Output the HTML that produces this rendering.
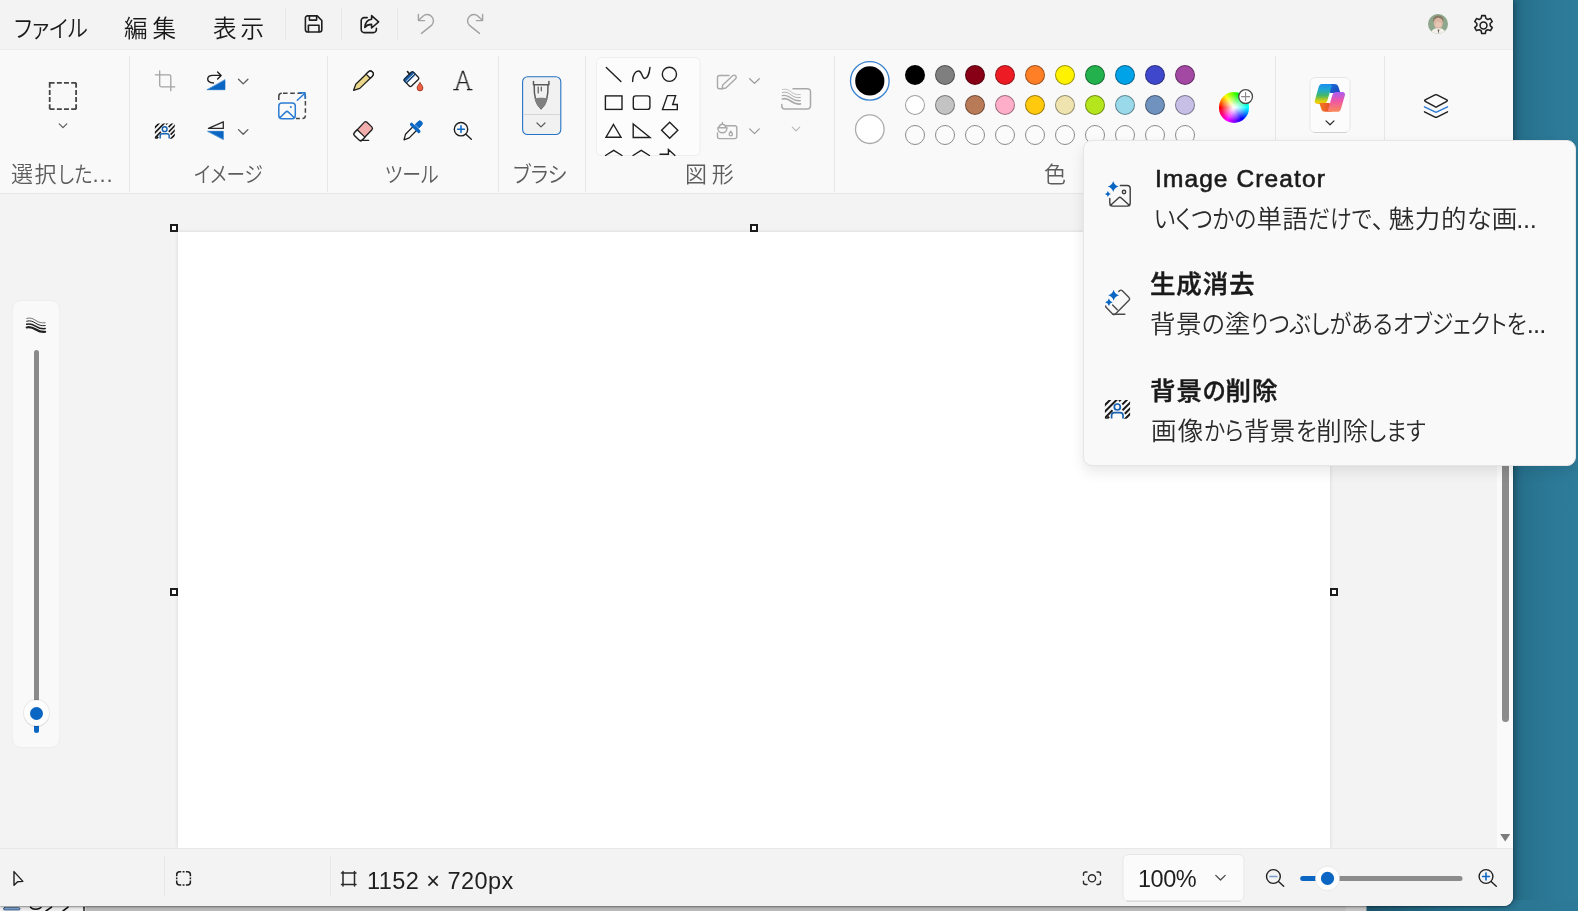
<!DOCTYPE html>
<html lang="ja">
<head>
<meta charset="utf-8">
<title>ペイント</title>
<style>
*{box-sizing:border-box;margin:0;padding:0}
html,body{width:1578px;height:911px;overflow:hidden}
body{position:relative;font-family:"Liberation Sans","Noto Sans CJK JP",sans-serif;color:#1b1b1b;
 background:linear-gradient(90deg,#246985 0px,#246985 1513px,#27708c 1522px,#2a7693 1540px,#2c7a98 1558px,#2d7c9a 1578px)}
.abs{position:absolute}
#bottomstrip{left:0;top:900px;width:1578px;height:11px;background:linear-gradient(90deg,#f2f2f2 0,#f2f2f2 85px,#bebebe 86px,#bebebe 1345px,#c9c9c9 1346px,#c9c9c9 1366px,#1d566c 1367px,#246b86 1440px,#2a7592 1513px,#2c7a98 1578px)}
#win{left:0;top:0;width:1513px;height:906px;background:#f3f3f3;border-radius:0 0 9px 0;overflow:hidden;box-shadow:3px 0 7px rgba(0,0,0,.22),0 1px 2px rgba(0,0,0,.35)}
#title{left:0;top:0;width:1513px;height:49px;background:#f3f3f3}
#ribbon{left:0;top:49px;width:1513px;height:145px;background:#f9f9f9;border-top:1px solid #ececec;border-bottom:1px solid #e6e6e6}
.menu{position:absolute;top:9.7px;font-size:23.6px;font-weight:350;line-height:38px;color:#1a1a1a;white-space:nowrap;font-feature-settings:"palt"}
.vsep{position:absolute;width:1px;background:#e7e7e7}
.glabel{position:absolute;top:159px;font-size:22px;font-weight:350;line-height:32px;color:#5d5d5d;white-space:nowrap;font-feature-settings:"palt"}
svg{position:absolute;overflow:visible}
.sw{position:absolute;width:20px;height:20px;border-radius:50%;border:1px solid rgba(0,0,0,.38)}
.sw.e{border:1.2px solid #8a8a8a;background:#fbfbfb}
#work{left:0;top:194px;width:1513px;height:654px;background:#f3f3f3}
#canvas{left:178px;top:232px;width:1152px;height:616px;background:#fff;box-shadow:0 0 4px rgba(0,0,0,.13)}
.hd{position:absolute;width:8px;height:8px;border:2px solid #1c1c1c;background:#fff}
#status{left:0;top:848px;width:1513px;height:58px;background:#f3f3f3;border-top:1px solid #e8e8e8}
#popup{left:1083px;top:139.500px;width:493px;height:326.800px;background:#f9f9f9;border-radius:9px;border:1px solid #e6e6e6;box-shadow:0 6px 14px rgba(0,0,0,.09),0 0 2px rgba(0,0,0,.06)}
#popin{left:1px;top:.5px;width:10px;height:10px}
.pt{position:absolute;font-weight:500;-webkit-text-stroke:.45px #1a1a1a;font-size:25.5px;line-height:34px;color:#1a1a1a;white-space:nowrap;font-feature-settings:"palt"}
.pd{position:absolute;font-weight:350;font-size:25.5px;line-height:34px;color:#2a2a2a;white-space:nowrap;font-feature-settings:"palt"}
.k{display:inline-block;transform-origin:0 50%}
.stx{font-size:23.500px;line-height:30px;color:#1f1f1f;white-space:nowrap}
.menu,.glabel,.pt,.pd,.stx,.aicon{will-change:transform}
</style>
</head>
<body>
<div id="bottomstrip" class="abs"><svg style="left:0;top:0" width="100" height="11" viewBox="0 900 100 11" fill="none" stroke-linecap="round"><rect x="3.500" y="907.700" width="16.500" height="2.200" rx="1.100" fill="#8fb8ea" stroke="#1d3f66" stroke-width=".8"/><path d="M30.500 907.200c2 2.600 8 2.600 10.500 .3" stroke="#111" stroke-width="1.500"/><path d="M46 911l5.500-3.800M63 911l5-3.800" stroke="#111" stroke-width="1.600"/><path d="M84 907.300v4" stroke="#111" stroke-width="1.400"/></svg></div>
<div id="win" class="abs">
  <div id="title" class="abs">
    <div class="menu" style="left:13.6px"><span class="k" style="transform:scaleX(0.904);margin-right:-7.86px">ファイル</span></div>
    <div class="menu" style="left:124.0px"><span style="letter-spacing:4.8px">編集</span></div>
    <div class="menu" style="left:212.8px"><span style="letter-spacing:3.8px">表示</span></div>
    <div class="vsep" style="left:285px;top:8px;height:32px"></div>
    <div class="vsep" style="left:341px;top:8px;height:32px"></div>
    <div class="vsep" style="left:397px;top:8px;height:32px"></div>

    <svg style="left:304px;top:14px" width="20" height="20" viewBox="0 0 20 20" fill="none" stroke="#1f1f1f" stroke-width="1.6" stroke-linejoin="round" stroke-linecap="round">
      <path d="M3.6 1.9h9.6l4.6 4.6v9.3a2.2 2.2 0 0 1-2.2 2.2H3.6a2.2 2.2 0 0 1-2.2-2.2V4.1a2.2 2.2 0 0 1 2.2-2.2z"/>
      <path d="M5.4 2.2v3.9h7.2V2.2M4.4 17.8v-6.6h10.6v6.6"/>
    </svg>
    <svg style="left:359px;top:13px" width="22" height="22" viewBox="0 0 22 22" fill="none" stroke="#1f1f1f" stroke-width="1.6" stroke-linejoin="round" stroke-linecap="round">
      <path d="M8.2 4.6H5.2a3 3 0 0 0-3 3v9a3 3 0 0 0 3 3h9.2a3 3 0 0 0 3-3v-1.2"/>
      <path d="M12.6 2.6l7 6.2-7 6.2v-3.6c-3.2 0-5.2.9-6.8 3 .4-4.800 2.800-7.800 6.800-8.200z"/>
    </svg>
    <svg style="left:415px;top:12px" width="22" height="24" viewBox="0 0 22 24" fill="none" stroke="#a2a2a2" stroke-width="1.4" stroke-linejoin="round" stroke-linecap="round">
      <path d="M3.4 2.400v6.200h6.200"/><path d="M3.700 8.300l4.200-4.100a6.300 6.300 0 0 1 8.900 8.900L6.500 21.400"/>
    </svg>
    <svg style="left:464px;top:12px" width="22" height="24" viewBox="0 0 22 24" fill="none" stroke="#a2a2a2" stroke-width="1.4" stroke-linejoin="round" stroke-linecap="round">
      <g transform="translate(22 0) scale(-1 1)"><path d="M3.4 2.400v6.200h6.200"/><path d="M3.700 8.300l4.200-4.100a6.300 6.300 0 0 1 8.900 8.900L6.500 21.400"/></g>
    </svg>
    <svg id="avatar" style="left:1428px;top:13.700px" width="20" height="20" viewBox="0 0 20 20"><defs><clipPath id="avc"><circle cx="10" cy="10" r="10"/></clipPath></defs><g clip-path="url(#avc)"><rect width="20" height="20" fill="#8ea68c"/><ellipse cx="10.300" cy="5.800" rx="5.300" ry="4.200" fill="#8b7a66"/><ellipse cx="10.300" cy="9.300" rx="4.600" ry="5.600" fill="#dcb8a4"/><ellipse cx="10.300" cy="10.500" rx="3" ry="2.600" fill="#e6c7b6"/><path d="M2.500 20c.5-4 3.500-5.800 7.800-5.800s7.300 1.800 7.800 5.800z" fill="#f3efe9"/><path d="M9.600 15.500l.8 4.500 1-4.500z" fill="#6b5a52"/></g></svg>
    <svg style="left:1471.200px;top:12.500px" width="25" height="25" viewBox="0 0 24 24" fill="none" stroke="#1f1f1f" stroke-width="1.5" stroke-linejoin="round">
      <circle cx="12" cy="12" r="3.3"/>
      <path d="M10.300 2.500h3.400l.6 2.700 1.800 1 2.600-.9 1.700 2.900-2 1.900v2l2 1.900-1.700 2.900-2.600-.9-1.800 1-.6 2.700h-3.400l-.6-2.700-1.800-1-2.600.9-1.700-2.900 2-1.900v-2l-2-1.900 1.700-2.900 2.600.9 1.800-1z"/>
    </svg>
  </div>
  <div id="ribbon" class="abs"></div>
  <div id="ribbonitems" class="abs" style="left:0;top:0;width:1513px;height:194px">
    <div class="vsep" style="left:129px;top:56px;height:136px"></div>
    <div class="vsep" style="left:327px;top:56px;height:136px"></div>
    <div class="vsep" style="left:498px;top:56px;height:136px"></div>
    <div class="vsep" style="left:585px;top:56px;height:136px"></div>
    <div class="vsep" style="left:834px;top:56px;height:136px"></div>
    <div class="vsep" style="left:1275px;top:56px;height:136px"></div>
    <div class="vsep" style="left:1384px;top:56px;height:136px"></div>
<!--ICONS-->
  <svg id="ricons" style="left:0;top:0" width="1513" height="200" viewBox="0 0 1513 200" fill="none" stroke-linecap="round" stroke-linejoin="round">
    <defs>
      <clipPath id="hatchclip"><rect x="1104.900" y="399.900" width="25.200" height="18.900"/></clipPath>
      <linearGradient id="cpL" x1="0" y1="0" x2="0" y2="1"><stop offset="0" stop-color="#1a8ff0"/><stop offset=".3" stop-color="#1fa9cf"/><stop offset=".58" stop-color="#45b865"/><stop offset=".85" stop-color="#d9cf12"/><stop offset="1" stop-color="#fbc80e"/></linearGradient>
      <linearGradient id="cpR" x1="0" y1="1" x2="0" y2="0"><stop offset="0" stop-color="#a95cf2"/><stop offset=".45" stop-color="#ee56a6"/><stop offset="1" stop-color="#fc8a58"/></linearGradient>
      <linearGradient id="cpT" x1="0" y1="0" x2="1" y2="1"><stop offset="0" stop-color="#1a73e0"/><stop offset="1" stop-color="#1b3fb5"/></linearGradient>
      <linearGradient id="cpB" x1="0" y1="0" x2="1" y2="0"><stop offset="0" stop-color="#e84a2a"/><stop offset="1" stop-color="#f27a25"/></linearGradient>
    </defs>
    <!-- select -->
    <path d="M49.700 82.800H76.100V109.200H49.700z" stroke="#454545" stroke-width="1.800" stroke-dasharray="4.900 2.250 5 2.100 5 2.250 4.900 0" stroke-linecap="butt" stroke-linejoin="miter"/>
    <path d="M59.200 123.800l3.800 3.800 3.800-3.800" stroke="#5a5a5a" stroke-width="1.200"/>
    <!-- crop -->
    <g stroke="#a3a3a3" stroke-width="1.300"><path d="M159.700 70.800V85.300a1.500 1.500 0 0 0 1.500 1.500H174.800"/><path d="M155.400 74.800H169.300a1.500 1.500 0 0 1 1.500 1.500V90.800"/></g>
    <!-- rotate -->
    <path d="M207.300 89.700H225V80z" fill="#0a66c2" stroke="#0a66c2" stroke-width=".6"/>
    <g stroke="#1f1f1f" stroke-width="1.400"><path d="M213.500 83c-3 -.2 -5.800 -1.600 -5.800 -4 0-2.400 2.500-3.600 5.300-3.600h7.600"/><path d="M217.600 72l3.500 3.400-3.500 3.500"/></g>
    <path d="M238.500 79.300l4.700 4.600 4.700-4.600" stroke="#5a5a5a" stroke-width="1.300"/>
    <!-- bg remove -->
    <g transform="translate(154.800 123.300) scale(.790 .810) translate(-1104.800 -399.800)">
      <g stroke="#1a1a1a" stroke-width="2" stroke-linecap="butt" clip-path="url(#hatchclip)">
        <path d="M1103 407l9-9M1103 413.500l14.500-14.500M1103 419.800l9.500-9.500M1105 420.800l4.200-4.200M1119 401.300l3.300-3.300M1122.300 404.500l6.900-6.900M1122.500 410.300l9.500-9.500M1124.800 413.800l7.200-7.200M1123.200 420.800l8.800-8.800"/>
      </g>
      <g stroke="#1560b0" stroke-width="1.800"><circle cx="1117.300" cy="407" r="3"/><path d="M1111.600 418.600v-3.300a2.700 2.700 0 0 1 2.700-2.700h6a2.700 2.700 0 0 1 2.700 2.700v3.300" stroke-linecap="butt"/></g>
    </g>
    <!-- flip -->
    <path d="M208.500 128.400L223.300 121.800V128.400z" stroke="#2a2a2a" stroke-width="1.300"/>
    <path d="M207.900 131.300H223.300V139.300z" fill="#0a66c2" stroke="#0a66c2" stroke-width=".6"/>
    <path d="M238.500 129.600l4.700 4.600 4.700-4.600" stroke="#5a5a5a" stroke-width="1.300"/>
    <!-- resize -->
    <path d="M283 93.200H302.400a3 3 0 0 1 3 3V115.500a3 3 0 0 1-3 3H296" stroke="#444" stroke-width="1.500" stroke-dasharray="4.600 2.600" stroke-linecap="butt"/>
    <path d="M278.800 100V96.200a3 3 0 0 1 3-3" stroke="#444" stroke-width="1.500" stroke-linecap="butt"/>
    <g stroke="#2b7cd3" stroke-width="1.500"><rect x="278.800" y="102.900" width="16.500" height="15.800" rx="3.200"/><path d="M280.300 117.300l5.300-5.200a2 2 0 0 1 2.800 0l5.400 5.200"/><path d="M297.300 100.300l7.600-7M299.300 92.800h5.800v5.800"/></g>
    <circle cx="290.800" cy="107" r="1" fill="#2b7cd3"/>
    <!-- pencil -->
    <g transform="translate(353.600 90.300) rotate(-44.100)" stroke="#1f1f1f" stroke-width="1.300">
      <path d="M0 0L5.800 -2.900H23.300a2.900 2.900 0 0 1 0 5.800H5.800z" fill="#ead78a"/>
      <path d="M20.300 -2.900h3a2.900 2.900 0 0 1 0 5.800h-3z" fill="#fdfdfd"/>
    </g>
    <!-- fill bucket -->
    <g transform="translate(411.450 79.200) rotate(-44)" stroke="#1f1f1f" stroke-width="1.300">
      <rect x="-6.300" y="-5" width="12.600" height="10" rx="1.600" fill="#fdfdfd"/>
      <path d="M-6.300 -1.300V-3.400a1.600 1.600 0 0 1 1.600 -1.600H4.700a1.600 1.600 0 0 1 1.600 1.600V-1.300z" fill="#1d5ea8" stroke="#16324f"/>
      <path d="M-5.300 -.400H5.300" stroke="#1d5ea8" stroke-width=".9"/>
      <path d="M-5.400 -2H5.400" stroke="#dcebfa" stroke-width=".9"/>
      <path d="M2.400 -5V-8.200" stroke-width="1.600"/>
    </g>
    <path d="M420 82.800c1.700 2 2.900 3.500 2.900 5.200a2.900 2.900 0 0 1-5.800 0c0-1.700 1.200-3.200 2.900-5.200z" fill="#ee5f46" stroke="#8a3216" stroke-width=".8"/>
    <!-- A serifs -->
    <path d="M453.700 89.700h4.600M467.400 89.700h4.600" stroke="#1f1f1f" stroke-width="1.200"/>
    <!-- eraser -->
    <g stroke="#1f1f1f" stroke-width="1.300">
      <path d="M354.400 132.700l9.800-10.300a2 2 0 0 1 2.800-.1l4.800 4.600a2 2 0 0 1 .1 2.800l-9.800 10.300a2 2 0 0 1-2.800.1l-4.800-4.600a2 2 0 0 1-.1-2.800z" fill="#f2adad"/>
      <path d="M357.200 129.800l7.700 7.300-2.800 2.900a2 2 0 0 1-2.800.1l-4.800-4.600a2 2 0 0 1-.1-2.800z" fill="#fdfdfd"/>
      <path d="M361 140.300h7.700"/>
    </g>
    <!-- picker -->
    <g stroke="#1f1f1f" stroke-width="1.300">
      <path d="M404 139.800l1.500-5.500 8-8.200 3.700 3.600-8 8.200z" fill="#fdfdfd"/>
    </g>
    <g fill="#0a66c2" stroke="#0a66c2" stroke-width="1"><path d="M415.300 124.500l2.700-2.800a2.500 2.500 0 0 1 3.600 3.500l-2.700 2.800z"/><path d="M411.500 124.300l7.400 7.200" stroke-width="3.200"/></g>
    <!-- zoom -->
    <g stroke="#1f1f1f" stroke-width="1.400"><circle cx="461" cy="129.200" r="6.700"/><path d="M466 134.200l5.300 5"/></g>
    <path d="M457.600 129.200h6.800M461 125.800v6.800" stroke="#0a66c2" stroke-width="1.500"/>
    <!-- brush button -->
    <rect x="522.600" y="76.700" width="38.200" height="57.800" rx="5" fill="#f1f1f1" stroke="#2473c4" stroke-width="1.100"/>
    <path d="M524 114.500h35.500" stroke="#d6d6d6" stroke-width="1"/>
    <path d="M537 123l4 3.900 4-3.900" stroke="#5a5a5a" stroke-width="1.200"/>
    <g stroke="#5a5a5a" stroke-width="1.500">
      <path d="M533.500 81.600v3.100h15.400v-3.100"/>
      <path d="M534.200 84.700c-.3 9.500 1.700 19.500 6.900 24.100 5.200-4.600 7.200-14.600 6.900-24.100"/>
      <path d="M538.200 87v6M541.300 87v3.800" stroke-width="1.200"/>
    </g>
    <path d="M534.600 98.200c2.300-.7 10.600-.7 12.900 0-.8 4.700-2.800 8.500-6.400 10.600-3.600-2.100-5.700-5.900-6.500-10.600z" fill="#808080"/>
    <!-- shapes gallery -->
    <rect x="596.500" y="57.500" width="103.500" height="98" rx="5" fill="#fcfcfc" stroke="#eeeeee" stroke-width="1"/>
    <g stroke="#1f1f1f" stroke-width="1.400" stroke-linejoin="miter">
      <path d="M606.300 67.400L620.900 81.500"/>
      <path d="M632.600 81.500c0-7 3-10.500 6-10.500 3.600 0 3.200 7.500 6.200 7.500 2.600 0 4.600-5.500 5.200-11.100" stroke-linejoin="round"/>
      <circle cx="669.400" cy="74.300" r="7.100"/>
      <rect x="605.400" y="95.900" width="16.600" height="13.500"/>
      <rect x="633.300" y="95.900" width="16.600" height="13.500" rx="2.500"/>
      <path d="M667.400 95.600H675.600L672.700 104.500H677.300V109.600H662.500z"/>
      <path d="M613.500 124.500L621 137.200H606z"/>
      <path d="M633.200 124V137.500H650z"/>
      <path d="M669.700 122.300L677.800 130.300L669.700 138.300L661.600 130.300z"/>
    </g>
    <g stroke="#1f1f1f" stroke-width="1.400" stroke-linejoin="miter" clip-path="inset(0)">
      <path d="M605.500 155.500L613.700 150.300L622 155.500" />
      <path d="M633 155.500L641.200 150.300L649.500 155.500"/>
      <path d="M660 154.300H668.400V149.500L675 155.500"/>
    </g>
    <!-- outline & fill (disabled) -->
    <g stroke="#a9a9a9" stroke-width="1.400">
      <path d="M729 75.500H719.500a2 2 0 0 0-2 2V86.800a2 2 0 0 0 2 2H722"/>
      <path d="M722 88.800l.8-3.800 9.800-9.200a2.100 2.100 0 0 1 3 0 2.100 2.100 0 0 1 0 3l-9.800 9.200z"/>
      <path d="M725.500 125.800H734.800a2 2 0 0 1 2 2V136.600a2 2 0 0 1-2 2H719.500a2 2 0 0 1-2-2V133"/>
      <path d="M717.800 127.800h9.200c0 3-2 5-4.600 5s-4.600-2-4.600-5zM718.800 127.500c.5-2 2-3.300 3.600-3.300s3.100 1.300 3.600 3.300M722.400 122.500v1.700"/>
      <path d="M730.800 131.200c1 1.300 1.600 2.200 1.600 3.100a1.600 1.600 0 0 1-3.200 0c0-.9.600-1.800 1.600-3.100z"/>
    </g>
    <path d="M749.700 78.700l4.800 4.700 4.800-4.700" stroke="#9a9a9a" stroke-width="1.300"/>
    <path d="M749.700 128.900l4.800 4.700 4.800-4.700" stroke="#9a9a9a" stroke-width="1.300"/>
    <!-- size -->
    <g stroke="#a9a9a9">
      <path d="M793 88.700H807.500a3 3 0 0 1 3 3V106a3 3 0 0 1-3 3H784.800a3 3 0 0 1-3-3V104.500" stroke-width="1.500"/>
      <path d="M782.300 89.6c3.800-1.200 6 .200 8.800 2.300s5.200 3.200 9.300 2.600" stroke-width="0.7"/>
      <path d="M782.300 92.6c3.800-1.200 6 .200 8.800 2.300s5.200 3.200 9.300 2.600" stroke-width="1.0"/>
      <path d="M782.300 95.7c3.800-1.200 6 .200 8.800 2.300s5.200 3.200 9.300 2.600" stroke-width="1.3"/>
      <path d="M782.300 99.0c3.800-1.200 6 .200 8.800 2.300s5.200 3.200 9.300 2.600" stroke-width="1.7"/>
    </g>
    <path d="M792.300 127.200l3.700 3.600 3.700-3.600" stroke="#b5b5b5" stroke-width="1.100"/>
    <!-- colours 1/2 -->
    <circle cx="869.800" cy="80.900" r="19.300" fill="#fdfdfd" stroke="#3a82cf" stroke-width="1.300"/>
    <circle cx="869.800" cy="80.900" r="14.600" fill="#000"/>
    <circle cx="869.800" cy="129.200" r="14.300" fill="#fff" stroke="#ababab" stroke-width="1.300"/>
    <!-- copilot button -->
    <rect x="1310" y="77.500" width="40" height="55" rx="5" fill="#fcfcfc" stroke="#e6e6e6" stroke-width="1"/>
    <path d="M1314 132.500h32" stroke="#d2d2d2" stroke-width="1"/>
    <path d="M1326 120.900l4 3.900 4-3.900" stroke="#2a2a2a" stroke-width="1.200"/>
    <g stroke="none">
      <path d="M1328 84.100h6.500c2.200 0 3.400 1.100 4 3l1.900 5.800h-6c-1.500 0-3 .3-4.500-.2z" fill="url(#cpT)"/>
      <path d="M1321.800 84.100h8c1.600 0 2.100 1.100 1.700 2.500l-4.200 14.200c-.6 2-1.800 3.100-3.800 3.100h-6.100c-2.200 0-3.100-1.500-2.500-3.600l3.800-13.200c.6-2 1.600-3 3.100-3z" fill="url(#cpL)"/>
      <g transform="rotate(180 1329.850 97.950)">
        <path d="M1328 84.100h6.500c2.200 0 3.400 1.100 4 3l1.900 5.800h-6c-1.500 0-3 .3-4.500-.2z" fill="url(#cpB)"/>
        <path d="M1321.800 84.100h8c1.600 0 2.100 1.100 1.700 2.500l-4.200 14.200c-.6 2-1.800 3.100-3.800 3.100h-6.100c-2.200 0-3.100-1.500-2.500-3.600l3.800-13.200c.6-2 1.600-3 3.100-3z" fill="url(#cpR)"/>
      </g>
    </g>
    <!-- layers -->
    <g stroke-width="1.500">
      <path d="M1424.500 106.900l10.500 5a2.300 2.300 0 0 0 2 0l10.500-5" stroke="#2b7cd3"/>
      <path d="M1424.500 111.900l10.500 5.200a2.300 2.300 0 0 0 2 0l10.500-5.200" stroke="#1f1f1f"/>
      <path d="M1425.200 99.800l9.800-4.900a2.300 2.300 0 0 1 2 0l9.800 4.900a.9.900 0 0 1 0 1.600l-9.800 5.300a2.300 2.300 0 0 1-2 0l-9.800-5.300a.9.900 0 0 1 0-1.600z" stroke="#1f1f1f" fill="#fbfbfb"/>
    </g>
  </svg>
  <div class="abs aicon" style="left:451px;top:66px;width:24px;height:30px;line-height:30px;text-align:center;font-size:24.6px;font-weight:200;color:#1f1f1f;font-family:'DejaVu Sans Light','DejaVu Sans',sans-serif;-webkit-text-stroke:.4px #1f1f1f;transform:scaleX(.9)">A</div>
  <div class="abs" id="wheel" style="left:1219px;top:92.300px;width:30.400px;height:30.400px;border-radius:50%;background:radial-gradient(circle,#fff 0,rgba(255,255,255,.85) 12%,rgba(255,255,255,0) 62%),conic-gradient(from 270deg,#ff0000,#ffff00 15%,#00ff00 30%,#00ffff 50%,#0000ff 65%,#ff00ff 83%,#ff0000)"></div>
  <svg style="left:1237px;top:87.500px" width="18" height="18" viewBox="0 0 18 18" fill="none"><circle cx="8.600" cy="8.600" r="6.900" fill="#fff" stroke="#4a4a4a" stroke-width="1.300"/><path d="M4.100 8.600h9M8.600 4.100v9" stroke="#8a8a8a" stroke-width="1.100"/></svg>
  <div class="sw" style="left:905px;top:64.7px;background:#000000"></div>
  <div class="sw" style="left:905px;top:94.800px;background:#ffffff"></div>
  <div class="sw e" style="left:905px;top:124.700px"></div>
  <div class="sw" style="left:935px;top:64.7px;background:#7f7f7f"></div>
  <div class="sw" style="left:935px;top:94.800px;background:#c3c3c3"></div>
  <div class="sw e" style="left:935px;top:124.700px"></div>
  <div class="sw" style="left:965px;top:64.7px;background:#880015"></div>
  <div class="sw" style="left:965px;top:94.800px;background:#b97a57"></div>
  <div class="sw e" style="left:965px;top:124.700px"></div>
  <div class="sw" style="left:995px;top:64.7px;background:#ed1c24"></div>
  <div class="sw" style="left:995px;top:94.800px;background:#ffaec9"></div>
  <div class="sw e" style="left:995px;top:124.700px"></div>
  <div class="sw" style="left:1025px;top:64.7px;background:#ff7f27"></div>
  <div class="sw" style="left:1025px;top:94.800px;background:#ffc90e"></div>
  <div class="sw e" style="left:1025px;top:124.700px"></div>
  <div class="sw" style="left:1055px;top:64.7px;background:#fff200"></div>
  <div class="sw" style="left:1055px;top:94.800px;background:#efe4b0"></div>
  <div class="sw e" style="left:1055px;top:124.700px"></div>
  <div class="sw" style="left:1085px;top:64.7px;background:#22b14c"></div>
  <div class="sw" style="left:1085px;top:94.800px;background:#b5e61d"></div>
  <div class="sw e" style="left:1085px;top:124.700px"></div>
  <div class="sw" style="left:1115px;top:64.7px;background:#00a2e8"></div>
  <div class="sw" style="left:1115px;top:94.800px;background:#99d9ea"></div>
  <div class="sw e" style="left:1115px;top:124.700px"></div>
  <div class="sw" style="left:1145px;top:64.7px;background:#3f48cc"></div>
  <div class="sw" style="left:1145px;top:94.800px;background:#7092be"></div>
  <div class="sw e" style="left:1145px;top:124.700px"></div>
  <div class="sw" style="left:1175px;top:64.7px;background:#a349a4"></div>
  <div class="sw" style="left:1175px;top:94.800px;background:#c8bfe7"></div>
  <div class="sw e" style="left:1175px;top:124.700px"></div>
<!--/ICONS-->
    <div class="glabel" style="left:11.4px"><span style="letter-spacing:1.59px">選択</span><span class="k" style="transform:scaleX(0.869);margin-right:-5.19px">した</span><span style="letter-spacing:0.9px">...</span></div>
    <div class="glabel" style="left:194.0px"><span class="k" style="transform:scaleX(0.843);margin-right:-12.77px">イメージ</span></div>
    <div class="glabel" style="left:384.6px"><span class="k" style="transform:scaleX(0.857);margin-right:-8.96px">ツール</span></div>
    <div class="glabel" style="left:513.3px"><span class="k" style="transform:scaleX(0.918);margin-right:-4.78px">ブラシ</span></div>
    <div class="glabel" style="left:685.0px"><span style="letter-spacing:4.8px">図形</span></div>
    <div class="glabel" style="left:1044.2px">色</div>
  </div>
  <div id="work" class="abs"></div>
  <div id="canvas" class="abs"></div>
  <!-- left brush size panel -->
  <div class="abs" style="left:12px;top:300px;width:48px;height:448px;background:#f9f9f9;border:1px solid #efefef;border-radius:8px"></div>
  <div class="abs" style="left:34px;top:350px;width:5px;height:355px;background:#8a8a8a;border-radius:2.5px 2.5px 0 0"></div>
  <div class="abs" style="left:34px;top:720px;width:5px;height:13px;background:#0a66c2;border-radius:0 0 2.5px 2.5px"></div>
  <div class="abs" style="left:23.5px;top:700.3px;width:25.800px;height:25.800px;border-radius:50%;background:#fdfdfd;box-shadow:0 0 0 1px rgba(0,0,0,.06),0 1px 1px rgba(0,0,0,.08)"></div>
  <div class="abs" style="left:29.800px;top:706.600px;width:13.200px;height:13.200px;border-radius:50%;background:#0a66c2"></div>
  <svg style="left:24px;top:315px" width="26" height="20" viewBox="24 315 26 20" fill="none" stroke="#1f1f1f" stroke-linecap="round">
    <path d="M26.700 318.4c4-1.100 6.300.300 9.200 2.100s5.300 2.800 9.300 2.300" stroke-width="0.6"/>
    <path d="M26.700 321.2c4-1.100 6.300.300 9.200 2.100s5.300 2.800 9.300 2.300" stroke-width="1.0"/>
    <path d="M26.700 324.2c4-1.100 6.300.300 9.200 2.100s5.300 2.800 9.300 2.300" stroke-width="1.5"/>
    <path d="M26.700 327.4c4-1.100 6.300.300 9.200 2.100s5.300 2.800 9.300 2.300" stroke-width="2.1"/>
  </svg>
  <!-- handles -->
  <div class="hd" style="left:170.400px;top:224px"></div>
  <div class="hd" style="left:750px;top:224px"></div>
  <div class="hd" style="left:170.400px;top:588px"></div>
  <div class="hd" style="left:1330px;top:588px"></div>
  <!-- vertical scrollbar -->
  <div class="abs" style="left:1497px;top:194px;width:16px;height:654px;background:#fafafa"></div>
  <div class="abs" style="left:1502px;top:205px;width:7px;height:517px;background:#8b8b8b;border-radius:3.500px"></div>
  <svg style="left:1499px;top:832px" width="12" height="10" viewBox="0 0 12 10"><path d="M1.200 2.100h10L6.200 9.600z" fill="#7c7c7c"/></svg>
  <div id="status" class="abs">
    <svg style="left:0;top:-1px" width="1513" height="58" viewBox="0 848 1513 58" fill="none" stroke-linecap="round" stroke-linejoin="round">
      <path d="M14 871.600V885.300L17.600 881.700L22.900 881.400z" stroke="#1f1f1f" stroke-width="1.400"/>
      <g stroke="#1f1f1f" stroke-width="1.500" stroke-linecap="butt"><path d="M176.700 876.200v-1.500a3 3 0 0 1 3-3h1.500M185.900 871.700h1.500a3 3 0 0 1 3 3v1.500M190.400 880.400v1.500a3 3 0 0 1-3 3h-1.500M181.200 884.900h-1.500a3 3 0 0 1-3-3v-1.500M182.600 871.700h1.900M182.600 884.900h1.900M176.700 877.400v1.900M190.400 877.400v1.900"/></g>
      <g stroke="#2a2a2a" stroke-width="1.500"><rect x="343" y="873" width="11.500" height="11.500"/><path d="M341.500 873h1.500M354.500 873h1.500M341.500 884.500h1.500M354.500 884.500h1.500M343 871.500v1.500M354.500 871.500v1.500M343 884.500v1.500M354.500 884.500v1.500"/></g>
      <g stroke="#2a2a2a" stroke-width="1.400"><circle cx="1092" cy="878.300" r="3.600"/><path d="M1083.500 875.200v-1.200a2 2 0 0 1 2-2h1.500M1100.500 875.200v-1.200a2 2 0 0 0-2-2h-1.500M1083.500 881.300v1.200a2 2 0 0 0 2 2h1.500M1100.500 881.300v1.200a2 2 0 0 1-2 2h-1.500"/></g>
      <rect x="1123" y="854.500" width="121" height="46.500" rx="5" fill="#fbfbfb" stroke="#e7e7e7"/>
      <path d="M1127 901.200h113" stroke="#cfcfcf" stroke-width="1"/>
      <path d="M1215.800 875.400l4.700 4.600 4.700-4.600" stroke="#4a4a4a" stroke-width="1.300"/>
      <g stroke="#1f1f1f" stroke-width="1.400"><circle cx="1273.400" cy="876.500" r="6.900"/><path d="M1278.500 881.500l5.200 4.800"/><circle cx="1486" cy="876.500" r="6.900"/><path d="M1491.100 881.500l5.200 4.800"/></g>
      <path d="M1270 876.500h6.800" stroke="#7a9ccf" stroke-width="1.700"/>
      <path d="M1482.600 876.500h6.800M1486 873.100v6.800" stroke="#0a66c2" stroke-width="1.600"/>
      <path d="M1302.700 878.400h20" stroke="#0a66c2" stroke-width="5"/>
      <path d="M1335 878.400h125" stroke="#8b8b8b" stroke-width="5"/>
      <circle cx="1327.500" cy="878.400" r="12.300" fill="#fdfdfd" stroke="rgba(0,0,0,.07)" stroke-width="1"/>
      <circle cx="1327.500" cy="878.400" r="6.600" fill="#0a66c2"/>
    </svg>
    <div class="vsep" style="left:164px;top:7px;height:40px"></div>
    <div class="vsep" style="left:330px;top:7px;height:40px"></div>
    <div class="abs stx" style="left:367px;top:17px;letter-spacing:.45px">1152 × 720px</div>
    <div class="abs stx" style="left:1137.500px;top:15px;letter-spacing:-.5px">100%</div>
  </div>
</div>
<div id="popup" class="abs"><div id="popin" class="abs">
  <svg style="left:0;top:0" width="60" height="326" viewBox="1085 141 60 326" fill="none" stroke-linecap="round" stroke-linejoin="round">
    <g stroke="#3d3d3d" stroke-width="1.400">
      <path d="M1120.300 185.500h6.900a3 3 0 0 1 3 3v14.600a3 3 0 0 1-3 3h-14.400a3 3 0 0 1-3-3v-4.700"/>
      <circle cx="1124" cy="192" r="1.700"/>
      <path d="M1110.300 205.600l8.200-7.700a2 2 0 0 1 2.800 0l8.300 7.700"/>
    </g>
    <path d="M1113.2 180.9Q1114.30 185.30 1118.7 186.4Q1114.30 187.50 1113.2 191.9Q1112.10 187.50 1107.7 186.4Q1112.10 185.30 1113.2 180.9z" fill="#0a66c2"/>
    <path d="M1107.9 191.0Q1108.50 193.40 1110.9 194Q1108.50 194.60 1107.9 197.0Q1107.30 194.60 1104.9 194Q1107.30 193.40 1107.9 191.0z" fill="#0a66c2"/>
    <g stroke="#4a4a4a" stroke-width="1.400">
      <path d="M1118.800 291.500l.7-.700a2 2 0 0 1 2.800 0l6.700 6.700a2 2 0 0 1 0 2.800l-13.600 13.600a2 2 0 0 1-2.800 0l-6.300-6.300a2 2 0 0 1-.6-1.600"/>
      <path d="M1112.600 305l4.700 4.700"/>
      <path d="M1113 314.200h11.800"/>
    </g>
    <path d="M1113.6 289.8Q1114.70 294.20 1119.1 295.3Q1114.70 296.40 1113.6 300.8Q1112.50 296.40 1108.1 295.3Q1112.50 294.20 1113.6 289.8z" fill="#0a66c2"/>
    <path d="M1108.9 298.5Q1109.66 301.54 1112.7 302.3Q1109.66 303.06 1108.9 306.1Q1108.14 303.06 1105.1 302.3Q1108.14 301.54 1108.9 298.5z" fill="#0a66c2"/>
    <g stroke="#1a1a1a" stroke-width="2" stroke-linecap="butt" clip-path="url(#hatchclip)">
      <path d="M1103 407l9-9M1103 413.500l14.500-14.500M1103 419.800l9.500-9.500M1105 420.800l4.200-4.200M1119 401.300l3.300-3.300M1122.300 404.500l6.900-6.900M1122.500 410.300l9.500-9.500M1124.800 413.800l7.200-7.200M1123.200 420.800l8.800-8.800"/>
    </g>
    <g stroke="#1560b0" stroke-width="1.700"><circle cx="1117.300" cy="407" r="3"/><path d="M1111.600 418.600v-3.300a2.700 2.700 0 0 1 2.700-2.700h6a2.700 2.700 0 0 1 2.700 2.700v3.300" stroke-linecap="butt"/></g>
  </svg>
  <div class="pt" style="left:70.300px;top:20.500px;font-size:24.500px;font-weight:400;-webkit-text-stroke:.6px #1a1a1a;letter-spacing:1.1px">Image Creator</div>
  <div class="pd" style="left:69.3px;top:61px"><span class="k" style="transform:scaleX(0.892);margin-right:-12.44px">いくつかの</span><span style="letter-spacing:0.28px">単語</span><span class="k" style="transform:scaleX(0.858);margin-right:-10.58px">だけで</span><span style="letter-spacing:4.23px">、</span><span style="letter-spacing:0.69px">魅力的</span><span class="k" style="transform:scaleX(0.975);margin-right:-0.62px">な</span><span style="letter-spacing:-0.82px">画</span><span style="letter-spacing:-0.35px">...</span></div>
  <div class="pt" style="left:65.2px;top:126px"><span style="letter-spacing:0.87px">生成消去</span></div>
  <div class="pd" style="left:65.3px;top:166px"><span style="letter-spacing:0.41px">背景</span><span class="k" style="transform:scaleX(0.929);margin-right:-1.73px">の</span>塗<span class="k" style="transform:scaleX(0.871);margin-right:-21.08px">りつぶしがある</span><span class="k" style="transform:scaleX(0.848);margin-right:-24.05px">オブジェクトを</span><span style="letter-spacing:-0.8px">...</span></div>
  <div class="pt" style="left:65.2px;top:233px"><span style="letter-spacing:0.93px">背景</span><span class="k" style="transform:scaleX(0.92);margin-right:-1.97px">の</span><span style="letter-spacing:1.0px">削除</span></div>
  <div class="pd" style="left:65.7px;top:273px"><span style="letter-spacing:1.19px">画像</span><span class="k" style="transform:scaleX(0.848);margin-right:-7.1px">から</span><span style="letter-spacing:0.28px">背景</span><span class="k" style="transform:scaleX(0.876);margin-right:-2.92px">を</span><span style="letter-spacing:0.59px">削除</span><span class="k" style="transform:scaleX(0.847);margin-right:-10.43px">します</span></div>
</div></div>
</body>
</html>
